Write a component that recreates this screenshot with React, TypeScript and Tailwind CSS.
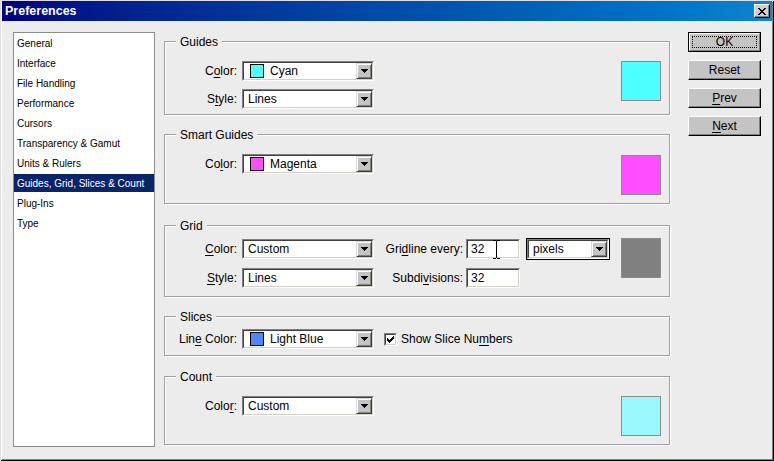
import React from 'react';

const items = [
    'General',
    'Interface',
    'File Handling',
    'Performance',
    'Cursors',
    'Transparency & Gamut',
    'Units & Rulers',
    'Guides, Grid, Slices & Count',
    'Plug-Ins',
    'Type',
];

const Arrow: React.FC = () => (
    <div className="flex h-[16px] w-[16px] items-center justify-center border border-t-[#dcdcdc] border-l-[#dcdcdc] border-b-[#404040] border-r-[#404040] bg-[#c4c4c4] shadow-[inset_1px_1px_0_#fff,inset_-1px_-1px_0_#808080]">
        <svg width="7" height="4" viewBox="0 0 7 4" shapeRendering="crispEdges">
            <path d="M0 0h7v1h-7zM1 1h5v1h-5zM2 2h3v1h-3zM3 3h1v1h-1z" fill="#000" />
        </svg>
    </div>
);

const Sunken: React.FC<{ className?: string; children?: React.ReactNode }> = ({ className = '', children }) => (
    <div className={`h-[20px] border border-t-[#808080] border-l-[#808080] border-b-white border-r-white ${className}`}>
        <div className="relative flex h-full items-center border border-t-[#404040] border-l-[#404040] border-b-[#d4d0c8] border-r-[#d4d0c8] bg-white">
            {children}
        </div>
    </div>
);

const Dropdown: React.FC<{ value: string; swatch?: string; className?: string }> = ({ value, swatch, className = 'w-[132px]' }) => (
    <Sunken className={className}>
        {swatch && <span className={`ml-[6px] h-[14px] w-[14px] border border-black ${swatch}`} />}
        <span className={`${swatch ? 'ml-[6px]' : 'ml-[4px]'} flex-1 text-[12px]`}>{value}</span>
        <Arrow />
    </Sunken>
);

const Label: React.FC<{ children: React.ReactNode; className?: string }> = ({ children, className = 'w-[77px] pr-[5px]' }) => (
    <div className={`text-right text-[12px] whitespace-nowrap ${className}`}>{children}</div>
);

const Swatch: React.FC<{ className: string }> = ({ className }) => (
    <div className={`ml-auto mr-[8px] h-[40px] w-[40px] border border-[#8c8c8c] ${className}`} />
);

const Group: React.FC<{ title: string; className: string; children: React.ReactNode }> = ({ title, className, children }) => (
    <div className={`border border-[#a0a0a0] shadow-[inset_1px_1px_0_#fff,1px_1px_0_#fff] ${className}`}>
        <div className="-mt-[8px] ml-[11px] h-[16px] w-fit bg-[#ececec] px-[4px] text-[12px] leading-[16px]">{title}</div>
        {children}
    </div>
);

const Button: React.FC<{ children: React.ReactNode }> = ({ children }) => (
    <div className="flex h-[20px] w-[73px] items-center justify-center border border-t-white border-l-white border-b-black border-r-black bg-[#c4c4c4] text-[12px] shadow-[inset_-1px_-1px_0_#808080]">
        {children}
    </div>
);

const U: React.FC<{ children: React.ReactNode }> = ({ children }) => <span className="underline underline-offset-2">{children}</span>;

export default function App() {
    return (
        <div className="flex h-[461px] w-[774px] flex-col overflow-hidden bg-[#ececec] px-[2px] pt-[1px] font-['Liberation_Sans',Arial,sans-serif] text-black shadow-[inset_1px_1px_0_#dfdfdf,inset_-1px_-1px_0_#000,inset_2px_2px_0_#fff,inset_-2px_-2px_0_#808080]">
            {/* title bar */}
            <div className="flex h-[20px] items-center bg-linear-to-r from-[#000080] to-[#1084d0] pl-[3px]">
                <span className="text-[12.5px] font-bold text-white">Preferences</span>
                <div className="mr-[2px] ml-auto flex h-[14px] w-[16px] items-center justify-center border border-t-white border-l-white border-b-black border-r-black bg-[#d4d0c8] shadow-[inset_-1px_-1px_0_#808080]">
                    <svg width="8" height="7" viewBox="0 0 8 7" shapeRendering="crispEdges">
                        <path d="M0 0h2v1h-2zM6 0h2v1h-2zM1 1h2v1h-2zM5 1h2v1h-2zM2 2h4v1h-4zM3 3h2v1h-2zM2 4h4v1h-4zM1 5h2v1h-2zM5 5h2v1h-2zM0 6h2v1h-2zM6 6h2v1h-2z" fill="#000" />
                    </svg>
                </div>
            </div>

            <div className="flex flex-1 pl-[11px]">
                {/* category list */}
                <div className="mt-[11px] flex h-[415px] w-[142px] flex-col gap-[2px] border border-[#8c8c8c] bg-white pt-[1px]">
                    {items.map((item, i) => (
                        <div
                            key={item}
                            className={`flex h-[18px] items-center pl-[3px] text-[10px] whitespace-nowrap ${i === 7 ? 'bg-[#0a246a] text-white' : ''}`}
                        >
                            {item}
                        </div>
                    ))}
                </div>

                {/* settings */}
                <div className="ml-[9px] flex w-[506px] flex-col pt-[20px]">
                    <Group title="Guides" className="h-[74px]">
                        <div className="mt-[11px] flex items-start">
                            <div className="flex flex-col gap-[8px]">
                                <div className="flex items-center">
                                    <Label>C<U>o</U>lor:</Label>
                                    <Dropdown value="Cyan" swatch="bg-[#4dffff]" />
                                </div>
                                <div className="flex items-center">
                                    <Label>S<U>t</U>yle:</Label>
                                    <Dropdown value="Lines" />
                                </div>
                            </div>
                            <Swatch className="bg-[#4dffff]" />
                        </div>
                    </Group>

                    <Group title="Smart Guides" className="mt-[19px] h-[70px]">
                        <div className="mt-[11px] flex items-start">
                            <div className="flex items-center">
                                <Label>Co<U>l</U>or:</Label>
                                <Dropdown value="Magenta" swatch="bg-[#ff4dff]" />
                            </div>
                            <Swatch className="mt-[1px] bg-[#ff4dff]" />
                        </div>
                    </Group>

                    <Group title="Grid" className="mt-[21px] h-[72px]">
                        <div className="mt-[4px] flex items-start">
                            <div className="flex flex-col gap-[8px]">
                                <div className="flex items-center">
                                    <Label><U>C</U>olor:</Label>
                                    <Dropdown value="Custom" />
                                    <Label className="w-[92px] pr-[3px]">Gri<U>d</U>line every:</Label>
                                    <Sunken className="w-[54px]">
                                        <span className="ml-[3px] text-[12px]">32</span>
                                        <svg className="absolute top-[-1px] left-[24px]" width="9" height="19" viewBox="0 0 9 19" shapeRendering="crispEdges">
                                            <path d="M1 0h3v1h-3zM5 0h3v1h-3zM4 1h1v17h-1zM1 18h3v1h-3zM5 18h3v1h-3z" fill="#000" />
                                        </svg>
                                    </Sunken>
                                    <div className="ml-[6px] border border-black">
                                        <Dropdown value="pixels" className="w-[82px] h-[18px]" />
                                    </div>
                                </div>
                                <div className="flex items-center">
                                    <Label><U>S</U>tyle:</Label>
                                    <Dropdown value="Lines" />
                                    <Label className="w-[92px] pr-[3px]">Subdi<U>v</U>isions:</Label>
                                    <Sunken className="w-[54px]">
                                        <span className="ml-[3px] text-[12px]">32</span>
                                    </Sunken>
                                </div>
                            </div>
                            <Swatch className="bg-[#808080]" />
                        </div>
                    </Group>

                    <Group title="Slices" className="mt-[19px] h-[40px]">
                        <div className="mt-[4px] flex items-center">
                            <Label>Lin<U>e</U> Color:</Label>
                            <Dropdown value="Light Blue" swatch="bg-[#4f87ff]" />
                            <div className="ml-[10px] h-[13px] w-[13px] border border-t-[#808080] border-l-[#808080] border-b-white border-r-white">
                                <div className="flex h-full w-full items-center justify-center border border-t-[#404040] border-l-[#404040] border-b-[#d4d0c8] border-r-[#d4d0c8] bg-white">
                                    <svg width="7" height="7" viewBox="0 0 7 7" shapeRendering="crispEdges">
                                        <path d="M6 0h1v3h-1zM5 1h1v3h-1zM4 2h1v3h-1zM3 3h1v3h-1zM2 4h1v3h-1zM1 3h1v3h-1zM0 2h1v3h-1z" fill="#000" />
                                    </svg>
                                </div>
                            </div>
                            <span className="ml-[4px] text-[12px]">Show Slice Nu<U>m</U>bers</span>
                        </div>
                    </Group>

                    <Group title="Count" className="mt-[20px] h-[69px]">
                        <div className="mt-[11px] flex items-start">
                            <div className="flex items-center">
                                <Label>Colo<U>r</U>:</Label>
                                <Dropdown value="Custom" />
                            </div>
                            <Swatch className="bg-[#99f9fa]" />
                        </div>
                    </Group>
                </div>

                {/* buttons */}
                <div className="mt-[11px] ml-[18px] flex flex-col gap-[8px]">
                    <div className="h-[20px] w-[73px] border border-black">
                        <div className="h-full w-full border border-t-white border-l-white border-b-[#808080] border-r-[#808080] bg-[#c4c4c4] p-[2px]">
                            <div className="flex h-full w-full items-center justify-center border border-dotted border-black text-[12px]">OK</div>
                        </div>
                    </div>
                    <Button>Reset</Button>
                    <Button><U>P</U>rev</Button>
                    <Button><U>N</U>ext</Button>
                </div>
            </div>
        </div>
    );
}
